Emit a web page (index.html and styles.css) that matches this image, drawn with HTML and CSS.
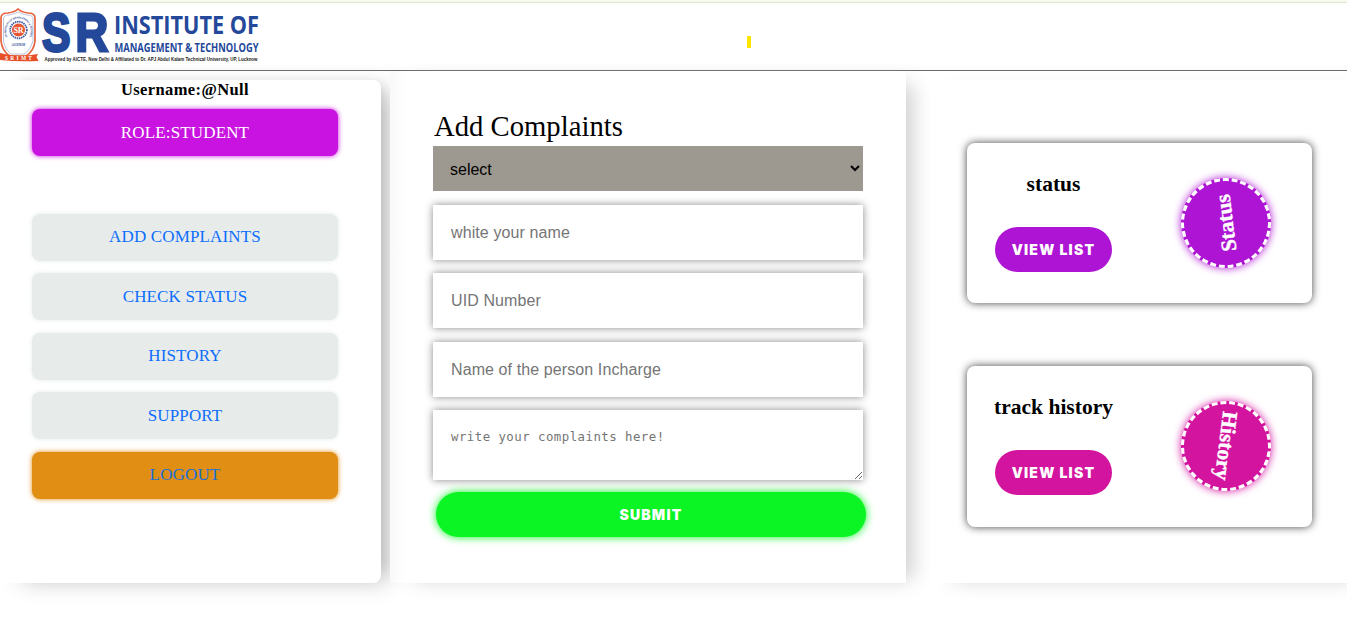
FILE: index.html
```html
<!DOCTYPE html>
<html lang="en">
<head>
<meta charset="utf-8">
<title>Complaints</title>
<link rel="stylesheet" href="styles.css">
</head>
<body>
<header class="topbar">
  <svg class="logo" width="270" height="66" viewBox="0 4 270 66">
    <path d="M1 18 Q1 13 8 13 Q15 12 18 9 Q21 12 28 13 Q35 13 35 18 V41 Q34 51 26 56 H10 Q2 51 1 41Z" fill="#fff" stroke="#e8623d" stroke-width="1.7"/>
    <path d="M3.500 19 Q3.500 15 9 15 Q15 14 18 12 Q21 14 27 15 Q33 15 33 19 V41 Q31 49 25 54 H11 Q5 49 3.500 41Z" fill="none" stroke="#9facd0" stroke-width=".7"/>
    <path id="arc" d="M7.500 37 A12.200 13 0 1 1 29.500 37" fill="none"/>
    <text class="seal-ring"><textPath href="#arc" textLength="56">SR INSTITUTE OF MANAGEMENT &amp; TECHNOLOGY</textPath></text>
    <circle cx="18.500" cy="30" r="8.300" fill="#fff" stroke="#40599c" stroke-width="1.800" stroke-dasharray="1.500 .7"/>
    <circle cx="18.500" cy="30" r="6.500" fill="#e8572f"/>
    <text class="seal-name" x="18.500" y="32.700" text-anchor="middle">SR</text>
    <text class="seal-city" x="18.500" y="45.500" text-anchor="middle">LUCKNOW</text>
    <path d="M0 53 Q18 58 38 54 L36.500 57 L38.500 61 Q18 62 0 60Z" fill="#e64f28"/>
    <text class="seal-ribbon" x="5" y="60" textLength="27">SRIMT</text>
    <text class="logo-sr" transform="translate(42 51) scale(.79 1)">S</text>
    <text class="logo-sr" transform="translate(75.500 51) scale(.84 1)">R</text>
    <text class="logo-name" x="114" y="34" textLength="145" lengthAdjust="spacingAndGlyphs">INSTITUTE OF</text>
    <text class="logo-dept" x="114.500" y="52" textLength="144" lengthAdjust="spacingAndGlyphs">MANAGEMENT &amp; TECHNOLOGY</text>
    <text class="logo-note" x="44.500" y="61.300" textLength="213" lengthAdjust="spacingAndGlyphs">Approved by AICTE, New Delhi &amp; Affiliated to Dr. APJ Abdul Kalam Technical University, UP, Lucknow</text>
  </svg>
  <span class="marker"></span>
</header>
<main class="board">
  <aside class="panel side">
    <p class="user">Username:@Null</p>
    <div class="item role">ROLE:STUDENT</div>
    <nav class="menu">
      <a class="item">ADD COMPLAINTS</a>
      <a class="item">CHECK STATUS</a>
      <a class="item">HISTORY</a>
      <a class="item">SUPPORT</a>
      <a class="item logout">LOGOUT</a>
    </nav>
  </aside>
  <section class="panel form">
    <h1 class="title">Add Complaints</h1>
    <select class="pick"><option>select</option></select>
    <input class="field" placeholder="white your name">
    <input class="field uid" placeholder="UID Number">
    <input class="field" placeholder="Name of the person Incharge">
    <textarea class="field area" placeholder="write your complaints here!"></textarea>
    <button class="submit">SUBMIT</button>
  </section>
  <section class="panel cards">
    <article class="card violet">
      <div class="info"><h2 class="name">status</h2><button class="view">VIEW LIST</button></div>
      <div class="badge up">Status</div>
    </article>
    <article class="card pink">
      <div class="info"><h2 class="name">track history</h2><button class="view">VIEW LIST</button></div>
      <div class="badge down">History</div>
    </article>
  </section>
</main>
</body>
</html>
```
FILE: styles.css
```css
* { box-sizing: border-box; }
body {
  margin: 0;
  height: 628px;
  overflow: hidden;
  background: #fff;
  font: 16px "Liberation Serif", serif;
}
.topbar {
  height: 71px;
  display: flex;
  align-items: flex-start;
  background: linear-gradient(#fff 60px, #f9f9f9 70px);
  border-top: 3px solid #dde5cf;
  border-bottom: 1px solid #6b696b;
  border-image: linear-gradient(#f7faef 2px, #dde5cf 2px, #dde5cf 3px, #6b696b 3px) 3 0 1 0;
}
.logo { margin-top: 1px; flex: none; overflow: visible; }
.marker { width: 4px; height: 12px; margin: 33px 0 0 477px; background: #ffe600; }
.logo-sr { font: bold 54px "Liberation Sans", sans-serif; fill: #24489a; stroke: #24489a; stroke-width: 2.8px; }
.logo-name { font: bold 25px "Open Sans", sans-serif; fill: #24489a; }
.logo-dept { font: bold 12px "Open Sans", sans-serif; fill: #24489a; }
.logo-note { font: bold 6px "Liberation Sans", sans-serif; fill: #222; }
.seal-ring { font: bold 2.6px "Liberation Sans", sans-serif; fill: #40599c; }
.seal-name { font: bold 8px "Liberation Serif", serif; fill: #fff; }
.seal-city { font: bold 2.6px "Liberation Sans", sans-serif; fill: #40599c; }
.seal-ribbon { font: bold 5.5px "Liberation Serif", serif; fill: #fff; }

.board { display: flex; align-items: flex-end; height: 512px; }
.panel { background: #fff; flex: none; box-shadow: 15px 5px 20px -9px #ccc; }
.side {
  width: 381px;
  height: 503px;
  padding: 0 43px 0 32px;
  border-radius: 0 8px 8px 0;
  box-shadow: 15px 5px 22px -8px #bbb, 10px -4px 14px -10px #ccc;
  text-align: center;
}
.user { margin: 0; height: 29px; line-height: 20px; font-size: 16.5px; font-weight: bold; letter-spacing: .4px; }
.item {
  display: block;
  height: 47px;
  line-height: 47px;
  border-radius: 8px;
  background: #e7eceb;
  color: #0d6efd;
  box-shadow: 0 0 5px #e7eceb;
  font-size: 17px;
  letter-spacing: .15px;
}
.role { background: #c913e0; color: #fff; box-shadow: 0 0 5px #c913e0; }
.menu { display: grid; gap: 12.4px; margin-top: 58px; }
.menu .item { line-height: 46px; }
.menu .item:nth-child(even) { line-height: 48px; }
.menu .logout { background: #e08e14; box-shadow: 0 0 5px #e08e14; color: #1b70d8; }

.form {
  width: 516px;
  height: 512px;
  margin-left: 9px;
  padding: 38px 43px 0;
  display: flex;
  flex-direction: column;
  background: linear-gradient(90deg, #f9f9f9, #fff 15px);
}
.title { margin: 0 0 0 1px; height: 37px; font-size: 28.7px; line-height: 35px; font-weight: normal; }
.pick {
  height: 45px;
  border: 0;
  border-radius: 0;
  padding: 1px 13px 0;
  background: #9d9991;
  color: #000;
  font: 16px "Liberation Sans", sans-serif;
}
.field {
  width: 430px;
  height: 55px;
  margin: 0 0 13px;
  padding: 0 18px;
  border: 0;
  outline: 0;
  background: #fff;
  box-shadow: 0 0 8px #888;
  color: #757575;
  font: 16px "Liberation Sans", sans-serif;
  letter-spacing: .1px;
}
.pick + .field { margin-top: 14px; }
.field.uid { margin-bottom: 14px; }
.field.area {
  height: 70px;
  padding-top: 19px;
  margin: 0 0 12px;
  font: 12.4px/16px "DejaVu Sans Mono", monospace;
  letter-spacing: .45px;
}
.submit {
  width: 430px;
  height: 45px;
  margin-left: 3px;
  border: 0;
  border-radius: 23px;
  background: #0bf423;
  box-shadow: 0 0 8px #0bf423;
  color: #fff;
  font: 900 14px Inter, sans-serif;
  letter-spacing: 1.2px;
}

.cards { width: 417px; height: 503px; margin-left: 24px; padding: 63px 0 0 37px; display: grid; align-content: start; gap: 63px; }
.card {
  width: 345px;
  height: 160px;
  padding: 27px 41px 0 28px;
  display: flex;
  justify-content: space-between;
  border-radius: 8px;
  background: #fff;
  box-shadow: 0 0 9px #444;
}
.violet { --tone: #ae14d3; }
.pink { --tone: #d3149f; height: 161px; }
.info { width: 117px; display: flex; flex-direction: column; align-items: center; }
.name { margin: 0 0 29px; font-size: 21.5px; line-height: 28px; white-space: nowrap; }
.view {
  width: 117px;
  height: 45px;
  padding: 0;
  border: 0;
  border-radius: 23px;
  background: var(--tone);
  color: #fff;
  font: 900 14px Inter, sans-serif;
  letter-spacing: 1.2px;
}
.badge {
  width: 90px;
  height: 90px;
  margin-top: 8px;
  border: 3px dashed #fff;
  border-radius: 50%;
  background: var(--tone);
  box-shadow: 0 0 8px var(--tone);
  color: #fff;
  font-size: 21.5px;
  font-weight: bold;
  line-height: 84px;
  text-align: center;
  -webkit-text-stroke: .4px #fff;
}
.up { transform: rotate(-97deg); }
.down { transform: rotate(97deg); }
```
